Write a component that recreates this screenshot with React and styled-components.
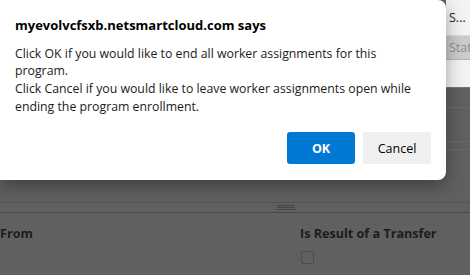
import React from "react";
import styled, { createGlobalStyle } from "styled-components";

const GlobalStyle = createGlobalStyle`
  html, body {
    margin: 0;
    padding: 0;
    background: #606060;
  }
  body {
    font-family: "Open Sans", "Noto Sans", sans-serif;
  }
`;

const PAGE = styled.div`
  width: 470px;
  height: 275px;
  overflow: hidden;
  background: #606060;
  display: flex;
  flex-direction: column;
`;

const TOPAREA = styled.div`
  display: flex;
  height: 202px;
`;

const DIALOG = styled.div`
  position: relative;
  z-index: 2;
  flex: 0 0 446px;
  height: 180px;
  box-sizing: border-box;
  padding: 16px 15px 16px 15px;
  background: #fff;
  border-radius: 0 8px 8px 0;
  box-shadow: 0 6px 18px rgba(0, 0, 0, 0.35);
  display: flex;
  flex-direction: column;
`;

const TITLE = styled.div`
  font-size: 13px;
  font-weight: 700;
  line-height: 18px;
  color: #000;
`;

const MESSAGE = styled.div`
  margin-top: 10.6px;
  font-size: 12.3px;
  line-height: 17.8px;
  color: #1b1b1b;
`;

const BUTTONS = styled.div`
  margin-top: auto;
  display: flex;
  justify-content: flex-end;
  gap: 8px;
`;

const BUTTON = styled.button`
  width: 68px;
  height: 32px;
  border: none;
  border-radius: 3px;
  font-family: "Open Sans", "Noto Sans", sans-serif;
  font-size: 12.5px;
  font-weight: ${(p) => (p.$primary ? 700 : 400)};
  color: ${(p) => (p.$primary ? "#fff" : "#000")};
  background: ${(p) => (p.$primary ? "#0078d4" : "#efefef")};
  padding: 0;
`;

const SIDESTRIP = styled.div`
  flex: 1;
  min-width: 0;
  display: flex;
  flex-direction: column;
`;

const STRIPROW = styled.div`
  height: ${(p) => p.$h}px;
  box-sizing: border-box;
  background: ${(p) => p.$bg};
  border-bottom: ${(p) => (p.$line ? `1px solid ${p.$line}` : "none")};
  padding-left: 3px;
  display: flex;
  align-items: center;
  font-size: 12.5px;
  color: ${(p) => p.$color || "#222"};
  white-space: nowrap;
  overflow: hidden;
`;

const FAINTLINE = styled.div`
  height: ${(p) => p.$gap}px;
  border-bottom: 1px solid #6a6a6a;
`;

const SPLITTER = styled.div`
  height: 9px;
  border-top: 1px solid #555;
  border-bottom: 1px solid #4a4a4a;
  display: flex;
  align-items: center;
  padding-left: 277px;
`;

const GRIP = styled.div`
  width: 18px;
  height: 5px;
  background: repeating-linear-gradient(
    to bottom,
    #444 0px,
    #444 1px,
    transparent 1px,
    transparent 2px
  );
`;

const FIELDS = styled.div`
  display: grid;
  grid-template-columns: 300px 1fr;
  padding-top: 12px;
`;

const FIELD = styled.div`
  display: flex;
  flex-direction: column;
  gap: 8px;
`;

const LABEL = styled.div`
  font-size: 12.6px;
  font-weight: 700;
  line-height: 18px;
  color: #1c1c1c;
  white-space: nowrap;
`;

const CHECKBOX = styled.div`
  width: 11px;
  height: 11px;
  margin-left: 1px;
  border: 1px solid #4b4b4b;
  border-radius: 2px;
`;

export default function App() {
  return (
    <PAGE>
      <GlobalStyle />
      <TOPAREA>
        <DIALOG>
          <TITLE>myevolvcfsxb.netsmartcloud.com says</TITLE>
          <MESSAGE>
            Click OK if you would like to end all worker assignments for this
            program.
            <br />
            Click Cancel if you would like to leave worker assignments open while
            ending the program enrollment.
          </MESSAGE>
          <BUTTONS>
            <BUTTON $primary>OK</BUTTON>
            <BUTTON>Cancel</BUTTON>
          </BUTTONS>
        </DIALOG>
        <SIDESTRIP>
          <STRIPROW $h={36} $bg="#f3f3f3" $line="#dcdcdc">
            S...
          </STRIPROW>
          <STRIPROW $h={24} $bg="#cbcbcb" $line="#b5b5b5" $color="#8f8f8f">
            Stat
          </STRIPROW>
          <STRIPROW $h={28} $bg="#f3f3f3" $line="#777" />
          <FAINTLINE $gap={19} />
          <FAINTLINE $gap={33} />
          <FAINTLINE $gap={7} />
        </SIDESTRIP>
      </TOPAREA>
      <SPLITTER>
        <GRIP />
      </SPLITTER>
      <FIELDS>
        <FIELD>
          <LABEL>From</LABEL>
        </FIELD>
        <FIELD>
          <LABEL>Is Result of a Transfer</LABEL>
          <CHECKBOX />
        </FIELD>
      </FIELDS>
    </PAGE>
  );
}
